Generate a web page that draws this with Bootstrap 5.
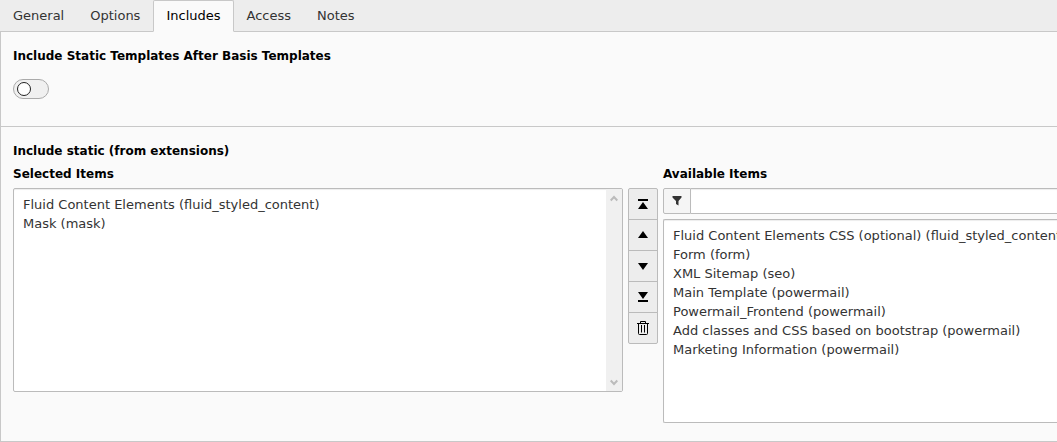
<!DOCTYPE html>
<html lang="en">
<head>
<meta charset="utf-8">
<meta name="viewport" content="width=device-width, initial-scale=1">
<title>Edit template record</title>
<link href="https://cdn.jsdelivr.net/npm/bootstrap@5.3.0/dist/css/bootstrap.min.css" rel="stylesheet">
<script src="https://cdn.jsdelivr.net/npm/bootstrap@5.3.0/dist/js/bootstrap.bundle.min.js" defer></script>
<style>
  body { font: 13px/19px Verdana, "DejaVu Sans", sans-serif; color: #333; background: #fafafa; }
  .record-tabs { background: #ededed; border-bottom: 1px solid #c8c8c8; }
  .record-tabs .nav-link { padding: 5px 12px; margin-bottom: -1px; line-height: 20px; color: #333; border: 1px solid transparent; border-radius: 2px 2px 0 0; }
  .record-tabs .nav-link.active { background: #fafafa; color: #000; border-color: #c8c8c8 #c8c8c8 #fafafa; }
  .record-panel { border: solid #c8c8c8; border-width: 0 0 1px 1px; }
  .form-section { padding: 15px 0 0 12px; }
  .form-section + .form-section { border-top: 1px solid #c8c8c8; padding-bottom: 18px; }
  .field-title { font: bold 12px/19px Verdana, "DejaVu Sans", sans-serif; color: #000; margin: 0; display: block; }
  .switch-input { appearance: none; display: block; width: 36px; height: 20px; margin: 13px 0 27px; padding: 2px 3px; border: 1px solid #aaa; border-radius: 10px; background: #f0f0f0; }
  .switch-input::before { content: ""; display: block; width: 14px; height: 14px; border: 1px solid #222; border-radius: 50%; background: #fff; }
  .switch-input:checked { padding-left: 17px; }
  .selector { gap: 5px; }
  .selected-col { flex: 610 1 0; min-width: 0; }
  .available-col { flex: 394 1 0; min-width: 0; }
  .item-box { height: 204px; border: 1px solid #bbb; border-radius: 2px; background: #fff; box-shadow: inset 0 1px 1px rgba(0,0,0,.075); overflow: hidden; }
  .item-box select { border: 0; outline: 0; background: transparent; color: #333; font: inherit; padding: 8px 9px; min-width: 0; overflow: hidden; }
  .item-box option { padding: 0; line-height: 19px; min-height: 19px; }
  .scroll-track { width: 16px; background: #f0f0f0; padding: 6px 0 5px; }
  .open-end { border-right: 0; border-radius: 2px 0 0 2px; }
  .open-end select { padding-right: 0; }
  .move-buttons { width: 30px; margin-top: 23px; }
  .move-buttons .btn, .filter-icon { border: 1px solid #bbb; background: #ededed; border-radius: 0; padding: 0; }
  .move-buttons .btn { height: 32px; display: flex; align-items: center; justify-content: center; }
  .move-buttons .btn + .btn { margin-top: -1px; }
  .move-buttons .btn:first-child { border-radius: 2px 2px 0 0; }
  .move-buttons .btn:last-child { border-radius: 0 0 2px 2px; }
  .filter-bar { height: 26px; margin-bottom: 5px; }
  .filter-icon { width: 28px; background: #f5f5f5; border-radius: 2px 0 0 2px; display: flex; align-items: center; justify-content: center; }
  .filter-bar input { border: solid #bbb; border-width: 1px 0; background: #fff; box-shadow: inset 0 1px 1px rgba(0,0,0,.075); min-width: 0; outline: 0; padding: 0 8px; }
</style>
</head>
<body>
<nav class="nav record-tabs flex-nowrap" aria-label="Record sections">
  <a class="nav-link" href="#general">General</a>
  <a class="nav-link" href="#options">Options</a>
  <a class="nav-link active" href="#includes" aria-current="page">Includes</a>
  <a class="nav-link" href="#access">Access</a>
  <a class="nav-link" href="#notes">Notes</a>
</nav>
<main class="record-panel" id="includes">
  <section class="form-section">
    <label class="field-title" for="afterBasis">Include Static Templates After Basis Templates</label>
    <input class="switch-input" type="checkbox" role="switch" id="afterBasis">
  </section>
  <section class="form-section">
    <h2 class="field-title mb-1">Include static (from extensions)</h2>
    <div class="selector d-flex align-items-start">
      <div class="selected-col">
        <label class="field-title mb-1" for="selectedItems">Selected Items</label>
        <div class="item-box d-flex">
          <select class="flex-fill" id="selectedItems" multiple size="10">
            <option>Fluid Content Elements (fluid_styled_content)</option>
            <option>Mask (mask)</option>
          </select>
          <div class="scroll-track d-flex flex-column justify-content-between align-items-center" aria-hidden="true">
            <svg width="8" height="7" viewBox="0 0 8 7" fill="none" stroke="#bbb" stroke-width="2"><path d="M.7 5.5 4 2l3.300 3.500"/></svg>
            <svg width="8" height="7" viewBox="0 0 8 7" fill="none" stroke="#bbb" stroke-width="2"><path d="M.7 1.500 4 5l3.300-3.500"/></svg>
          </div>
        </div>
      </div>
      <div class="move-buttons d-flex flex-column flex-shrink-0">
        <button class="btn" type="button" aria-label="Move to top"><svg width="16" height="16" viewBox="0 0 16 16"><path d="M3 3h10v2H3zM8 6l5 7H3z"/></svg></button>
        <button class="btn" type="button" aria-label="Move up"><svg width="16" height="16" viewBox="0 0 16 16"><path d="m8 4 5 7H3z"/></svg></button>
        <button class="btn" type="button" aria-label="Move down"><svg width="16" height="16" viewBox="0 0 16 16"><path d="m8 12 5-7H3z"/></svg></button>
        <button class="btn" type="button" aria-label="Move to bottom"><svg width="16" height="16" viewBox="0 0 16 16"><path d="M3 11h10v2H3zM8 10l5-7H3z"/></svg></button>
        <button class="btn" type="button" aria-label="Remove"><svg width="16" height="16" viewBox="0 0 16 16" fill="none" stroke="#000"><path d="M2 3.500h12M5.500 3V1.500h5V3M3.500 4v9.500q0 1 1 1h7q1 0 1-1V4M6.500 5v7.500M9.500 5v7.500"/></svg></button>
      </div>
      <div class="available-col">
        <label class="field-title mb-1" for="availableItems">Available Items</label>
        <div class="filter-bar d-flex">
          <label class="filter-icon" for="filterText" aria-label="Filter"><svg width="10" height="10" viewBox="0 0 10 10" fill="#333"><path d="M.5 0h9v1.500L6.500 5v4.500L4 8V5L.5 1.500z"/></svg></label>
          <input class="flex-fill" type="text" id="filterText">
        </div>
        <div class="item-box open-end d-flex">
          <select class="flex-fill" id="availableItems" multiple size="10">
            <option>Fluid Content Elements CSS (optional) (fluid_styled_content)</option>
            <option>Form (form)</option>
            <option>XML Sitemap (seo)</option>
            <option>Main Template (powermail)</option>
            <option>Powermail_Frontend (powermail)</option>
            <option>Add classes and CSS based on bootstrap (powermail)</option>
            <option>Marketing Information (powermail)</option>
          </select>
        </div>
      </div>
    </div>
  </section>
</main>
</body>
</html>
